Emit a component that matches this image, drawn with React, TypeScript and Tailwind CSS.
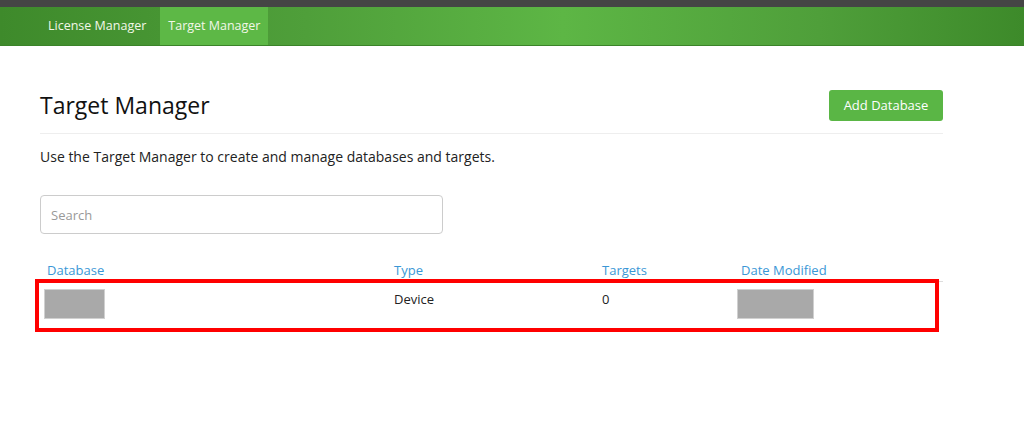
import React from "react";

const font = { fontFamily: '"Open Sans", "Liberation Sans", sans-serif' };

function Redacted({ width }: { width: string }) {
  return <div className={`${width} h-[30px] bg-[#a9a9a9] border border-[#d0d0d0]`}></div>;
}

export default function App() {
  return (
    <div className="w-[1024px] h-[428px] bg-white overflow-hidden" style={font}>
      <div className="h-[7px] bg-[#454545]"></div>
      <nav className="h-[39px] flex pl-[36px] bg-[linear-gradient(90deg,#3e8a2b_0%,#4f9f3a_30%,#5db645_55%,#4f9f3a_80%,#3d8a2a_100%)] border-b border-[#3b8329]">
        <a className="pl-3 pr-[14px] flex items-center whitespace-nowrap text-[12.5px] text-[#f2f7e8]">License Manager</a>
        <a className="px-[8px] flex items-center whitespace-nowrap text-[12.5px] text-[#f2f7e8] bg-[#5db846]">Target Manager</a>
      </nav>

      <main className="ml-10 w-[903px]">
        <div className="mt-[44px] flex items-center justify-between">
          <h1 className="text-[23px] leading-[31px] text-[#111] font-normal">Target Manager</h1>
          <button className="w-[114px] h-[31px] rounded-[3px] bg-[#5ab645] text-white text-[13px]">
            Add Database
          </button>
        </div>
        <hr className="mt-[12px] border-t border-[#eeeeee]" />
        <p className="mt-[13px] text-[14px] leading-[20px] text-[#222]">
          Use the Target Manager to create and manage databases and targets.
        </p>
        <input
          placeholder="Search"
          className="mt-[28px] w-[403px] h-[39px] px-[10px] border border-[#cccccc] rounded-[4px] text-[13px] placeholder:text-[#999] outline-none"
        />

        <div className="mt-[27px] grid grid-cols-[347px_208px_139px_209px] text-[13px] leading-[18px] text-[#3a97d6]">
          <div className="px-[7px]">Database</div>
          <div className="px-[7px]">Type</div>
          <div className="px-[7px]">Targets</div>
          <div className="px-[7px]">Date Modified</div>
        </div>
        <div className="relative mt-[2px] border-t border-[#dddddd] grid grid-cols-[347px_208px_139px_209px] text-[13px] leading-[18px] text-[#222] pt-[7px] pb-[9px]">
          <div className="pl-[4px]">
            <Redacted width="w-[61px]" />
          </div>
          <div className="px-[7px] pt-[1px]">Device</div>
          <div className="px-[7px] pt-[1px]">0</div>
          <div className="pl-[3px]">
            <Redacted width="w-[77px]" />
          </div>
          <div className="absolute left-[-5px] right-[4px] top-[-3px] bottom-[-4px] border-[4px] border-[#ff0000]"></div>
        </div>
      </main>
    </div>
  );
}
